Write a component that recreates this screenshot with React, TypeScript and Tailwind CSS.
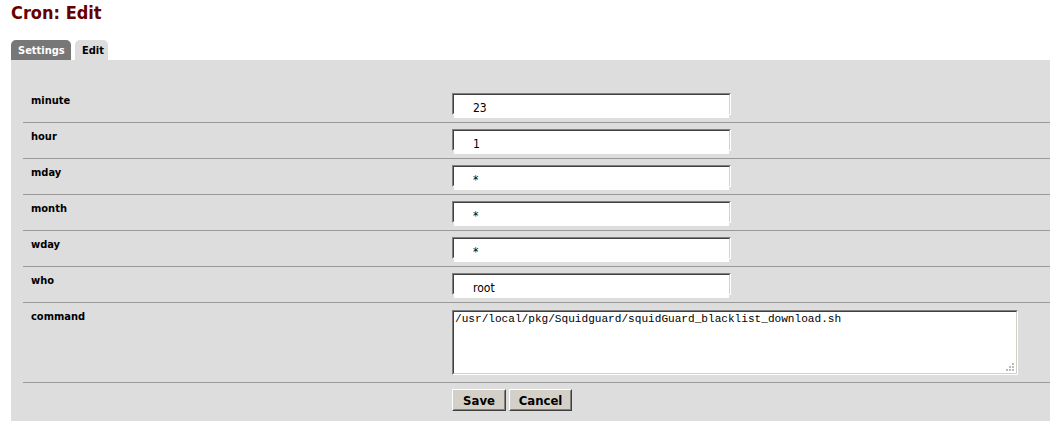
import React from "react";

const font = "font-['DejaVu_Sans_Condensed','DejaVu_Sans',sans-serif] [font-stretch:condensed]";

function Field({ value }: { value: string }) {
  return (
    <div className="w-[279px] h-[22px] border border-t-[#808080] border-l-[#808080] border-b-white border-r-white">
      <div className="w-full h-full border border-t-[#404040] border-l-[#404040] border-b-[#d4d0c8] border-r-[#d4d0c8] bg-white">
        <input
          readOnly
          defaultValue={value}
          className={`w-full h-full bg-white outline-none pl-[19px] pb-[1px] text-[12px] text-black ${font}`}
        />
      </div>
    </div>
  );
}

function Row({ label, value }: { label: string; value: string }) {
  return (
    <div className="flex h-[36px] border-b border-[#999999]">
      <div className="w-[429px] pl-[8px] pt-[6px] text-[11px] font-bold text-black">{label}</div>
      <div className="pt-[6px]">
        <Field value={value} />
      </div>
    </div>
  );
}

function Button({ label, w }: { label: string; w: string }) {
  return (
    <div className={`${w} h-[22px] border border-t-white border-l-white border-b-[#404040] border-r-[#404040]`}>
      <div className="w-full h-full border border-t-[#d4d0c8] border-l-[#d4d0c8] border-b-[#808080] border-r-[#808080] bg-[#d4d0c8] flex items-center justify-center pt-[1px] text-[13px] font-bold text-black">
        {label}
      </div>
    </div>
  );
}

export default function App() {
  const rows: [string, string][] = [
    ["minute", "23"],
    ["hour", "1"],
    ["mday", "*"],
    ["month", "*"],
    ["wday", "*"],
    ["who", "root"],
  ];
  return (
    <div className={`w-[1050px] h-[422px] bg-white overflow-hidden ${font}`}>
      <div className="pl-[11px]">
        <div className="h-[40px] pt-[2px] text-[18px] font-bold text-[#660000] leading-[22px]">Cron: Edit</div>
        <div className="flex gap-[4px] h-[20px] items-end">
          <div className="h-[20px] w-[60px] bg-[#777777] rounded-t-[5px] text-white text-[11px] font-bold pl-[7px] pt-[4px] leading-[13px]">
            Settings
          </div>
          <div className="h-[20px] w-[33px] bg-[#dddddd] rounded-t-[5px] text-black text-[11px] font-bold pl-[7px] pt-[4px] leading-[13px]">
            Edit
          </div>
        </div>
        <div className="bg-[#dddddd] h-[361px] pl-[12px] pt-[27px]">
          {rows.map(([l, v]) => (
            <Row key={l} label={l} value={v} />
          ))}
          <div className="flex h-[80px] border-b border-[#999999]">
            <div className="w-[429px] pl-[8px] pt-[6px] text-[11px] font-bold text-black">command</div>
            <div className="pt-[7px]">
              <div className="relative w-[566px] h-[65px] border border-t-[#808080] border-l-[#808080] border-b-white border-r-white">
                <div className="w-full h-full border border-t-[#404040] border-l-[#404040] border-b-[#d4d0c8] border-r-[#d4d0c8] bg-white">
                  <textarea
                    readOnly
                    defaultValue="/usr/local/pkg/Squidguard/squidGuard_blacklist_download.sh"
                    className="w-full h-full resize-none outline-none bg-white pl-[1px] pt-[1px] text-[11.1px] leading-[13px] text-black font-['Liberation_Mono','Courier_New',monospace] [font-stretch:normal]"
                  />
                </div>
                <div className="absolute right-[3px] bottom-[3px] grid grid-cols-3 gap-[1px]">
                  <span className="w-[2px] h-[2px]" />
                  <span className="w-[2px] h-[2px]" />
                  <span className="w-[2px] h-[2px] bg-[#bbbbbb]" />
                  <span className="w-[2px] h-[2px]" />
                  <span className="w-[2px] h-[2px] bg-[#bbbbbb]" />
                  <span className="w-[2px] h-[2px] bg-[#bbbbbb]" />
                  <span className="w-[2px] h-[2px] bg-[#bbbbbb]" />
                  <span className="w-[2px] h-[2px] bg-[#bbbbbb]" />
                  <span className="w-[2px] h-[2px] bg-[#bbbbbb]" />
                </div>
              </div>
            </div>
          </div>
          <div className="flex pl-[429px] pt-[6px] gap-[3px]">
            <Button label="Save" w="w-[54px]" />
            <Button label="Cancel" w="w-[63px]" />
          </div>
        </div>
      </div>
    </div>
  );
}
